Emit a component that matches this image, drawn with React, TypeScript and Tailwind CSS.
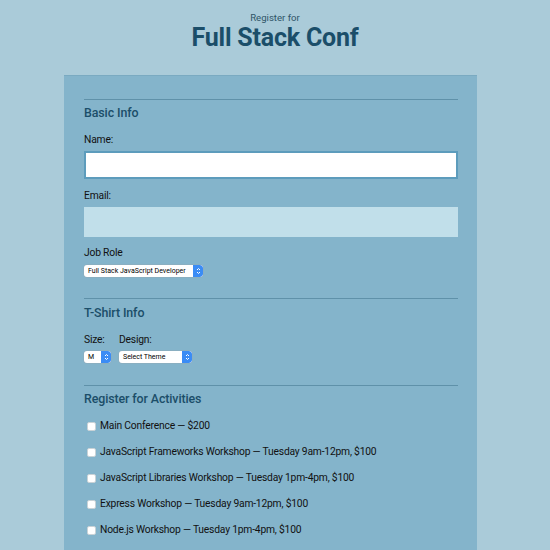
import React from "react"

const activities = [
  "Main Conference — $200",
  "JavaScript Frameworks Workshop — Tuesday 9am-12pm, $100",
  "JavaScript Libraries Workshop — Tuesday 1pm-4pm, $100",
  "Express Workshop — Tuesday 9am-12pm, $100",
  "Node.js Workshop — Tuesday 1pm-4pm, $100",
]

function FakeSelect({ label, width }: { label: string; width: string }) {
  return (
    <div className={`flex h-[12px] ${width} items-stretch rounded-[3px] bg-white shadow-[0_0_0_0.5px_#8fa9b8] overflow-hidden`}>
      <div className="flex-1 pl-[4px] text-[7px] leading-[12px] text-black truncate">{label}</div>
      <div className="flex w-[10px] items-center justify-center bg-[#3b8cf5] rounded-r-[3px]">
        <svg width="5" height="8" viewBox="0 0 5 8" fill="none" stroke="white" strokeWidth="1">
          <path d="M1 3 L2.5 1.5 L4 3" />
          <path d="M1 5 L2.5 6.5 L4 5" />
        </svg>
      </div>
    </div>
  )
}

function Heading({ children }: { children: React.ReactNode }) {
  return <div className="h-[18px] text-[12.4px] leading-[18px] font-medium text-[#1b4e69] tracking-[-0.1px]">{children}</div>
}

function Label({ children, className = "" }: { children: React.ReactNode; className?: string }) {
  return <div className={`h-[14px] text-[10.3px] leading-[14px] tracking-[-0.2px] text-[#111] ${className}`}>{children}</div>
}

export default function App() {
  return (
    <div className="min-h-[550px] h-[550px] overflow-hidden bg-[#aacbd9] font-['Roboto',sans-serif]">
      <div className="pt-[11px] text-center">
        <div className="text-[9.6px] leading-[12px] text-[#2f5568] pt-px">Register for</div>
        <div className="text-[25px] leading-[28px] font-bold text-[#1b4e69] tracking-[-0.2px]">Full Stack Conf</div>
      </div>

      <div className="ml-[64px] mt-[23px] w-[413px] h-[500px] bg-[#84b4cb] border-t border-[#7aaac1] px-[20px] pr-[19px] pt-[23px]">
        <div className="h-px bg-[#5f91a9]" />
        <div className="mt-[4px]"><Heading>Basic Info</Heading></div>
        <Label className="mt-[11px]">Name:</Label>
        <div className="mt-[4px] h-[28px] bg-white border-2 border-[#5d9cbc]" />
        <Label className="mt-[10px]">Email:</Label>
        <div className="mt-[4px] h-[30px] bg-[#c1dfea]" />
        <Label className="mt-[9px]">Job Role</Label>
        <div className="mt-[5px]">
          <FakeSelect label="Full Stack JavaScript Developer" width="w-[119px]" />
        </div>

        <div className="mt-[21px] h-px bg-[#5f91a9]" />
        <div className="mt-[5px]"><Heading>T-Shirt Info</Heading></div>
        <div className="mt-[11px] flex gap-[8px]">
          <div className="w-[27px]">
            <Label>Size:</Label>
            <div className="mt-[4px]"><FakeSelect label="M" width="w-[27px]" /></div>
          </div>
          <div>
            <Label>Design:</Label>
            <div className="mt-[4px]"><FakeSelect label="Select Theme" width="w-[73px]" /></div>
          </div>
        </div>

        <div className="mt-[22px] h-px bg-[#5f91a9]" />
        <div className="mt-[4px]"><Heading>Register for Activities</Heading></div>
        <div className="mt-[11px] flex flex-col gap-[12px]">
          {activities.map((a) => (
            <div key={a} className="flex h-[14px] items-center">
              <div className="ml-[3px] h-[9px] w-[9px] rounded-[2px] bg-white border border-[#c9d2d6]" />
              <span className="ml-[4px] text-[10.3px] leading-[14px] tracking-[-0.2px] text-[#111]">{a}</span>
            </div>
          ))}
        </div>
      </div>
    </div>
  )
}
